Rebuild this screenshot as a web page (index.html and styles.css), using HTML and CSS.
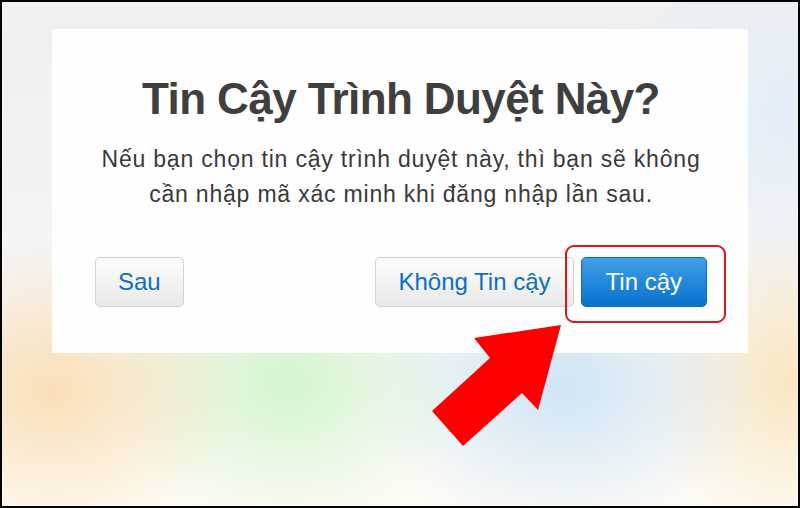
FILE: index.html
```html
<!DOCTYPE html>
<html lang="vi">
<head>
    <meta charset="UTF-8">
    <meta name="viewport" content="width=device-width, initial-scale=1.0">
    <title>Tin Cậy Trình Duyệt Này?</title>
    <link rel="stylesheet" href="styles.css">
</head>
<body>
    <div class="frame">
        <div class="dialog">
            <h1 class="title">Tin Cậy Trình Duyệt Này?</h1>
            <p class="message">Nếu bạn chọn tin cậy trình duyệt này, thì bạn sẽ không<br>cần nhập mã xác minh khi đăng nhập lần sau.</p>

            <div class="actions">
                <button class="button">Sau</button>
                <div class="actions-right">
                    <button class="button">Không Tin cậy</button>
                    <span class="highlight">
                        <button class="button primary">Tin cậy</button>
                    </span>
                </div>
            </div>
        </div>

        <!-- annotation arrow -->
        <svg class="arrow" width="800" height="508" viewBox="0 0 800 508">
            <polygon points="561,325 474,338 490,358 432,411 463,446 522,393 538,410" fill="#ff0000"/>
        </svg>
    </div>
</body>
</html>
```

FILE: styles.css
```css
* {
    box-sizing: border-box;
}
body {
    margin: 0;
    padding: 0;
    font-family: "Liberation Sans", Arial, sans-serif;
}
.frame {
    position: relative;
    width: 800px;
    height: 508px;
    border: 2px solid #000;
    padding: 27px 50px 0;
    background-color: #fbfbfa;
    background-image:
        radial-gradient(ellipse 190px 150px at 50px 390px, rgba(250, 212, 155, 0.7), rgba(250, 212, 155, 0)),
        radial-gradient(ellipse 180px 150px at 285px 380px, rgba(205, 245, 200, 0.85), rgba(205, 245, 200, 0)),
        radial-gradient(ellipse 200px 150px at 560px 385px, rgba(200, 226, 245, 0.85), rgba(200, 226, 245, 0)),
        radial-gradient(ellipse 150px 160px at 790px 380px, rgba(250, 226, 180, 0.8), rgba(250, 226, 180, 0)),
        radial-gradient(ellipse 220px 200px at 800px 110px, rgba(226, 238, 250, 0.9), rgba(226, 238, 250, 0)),
        linear-gradient(#efefef, #f5f5f5 280px, #fdfbf6 470px);
}
.dialog {
    width: 696px;
    height: 324px;
    background-color: #fefefe;
    padding: 44px 41px 0 43px;
    text-align: center;
}
.title {
    margin: 0;
    font-size: 44px;
    line-height: 52px;
    font-weight: bold;
    letter-spacing: -0.6px;
    color: #3f3f3f;
}
.message {
    margin: 17px 0 0;
    font-size: 23px;
    line-height: 35px;
    letter-spacing: 0.8px;
    color: #3a3a3a;
}
.actions {
    display: flex;
    justify-content: space-between;
    align-items: center;
    margin-top: 45px;
}
.actions-right {
    display: flex;
    align-items: center;
    gap: 7px;
}
.button {
    height: 50px;
    padding: 0 22px;
    font-family: "Liberation Sans", Arial, sans-serif;
    font-size: 24px;
    color: #0d6fc4;
    background: linear-gradient(#fdfdfd, #e9e9e9);
    border: 1px solid #d2d2d2;
    border-radius: 5px;
    cursor: pointer;
}
.button.primary {
    color: #ffffff;
    background: linear-gradient(#3f9fea, #0872cc);
    border-color: #0a6dc2;
    padding: 0 24px;
}
.highlight {
    position: relative;
    display: inline-block;
}
.highlight::after {
    content: "";
    position: absolute;
    left: -16px;
    right: -19px;
    top: -12px;
    bottom: -16px;
    border: 2px solid #e3121b;
    border-radius: 9px;
    pointer-events: none;
}
.arrow {
    position: absolute;
    left: -2px;
    top: -2px;
    pointer-events: none;
}
```
